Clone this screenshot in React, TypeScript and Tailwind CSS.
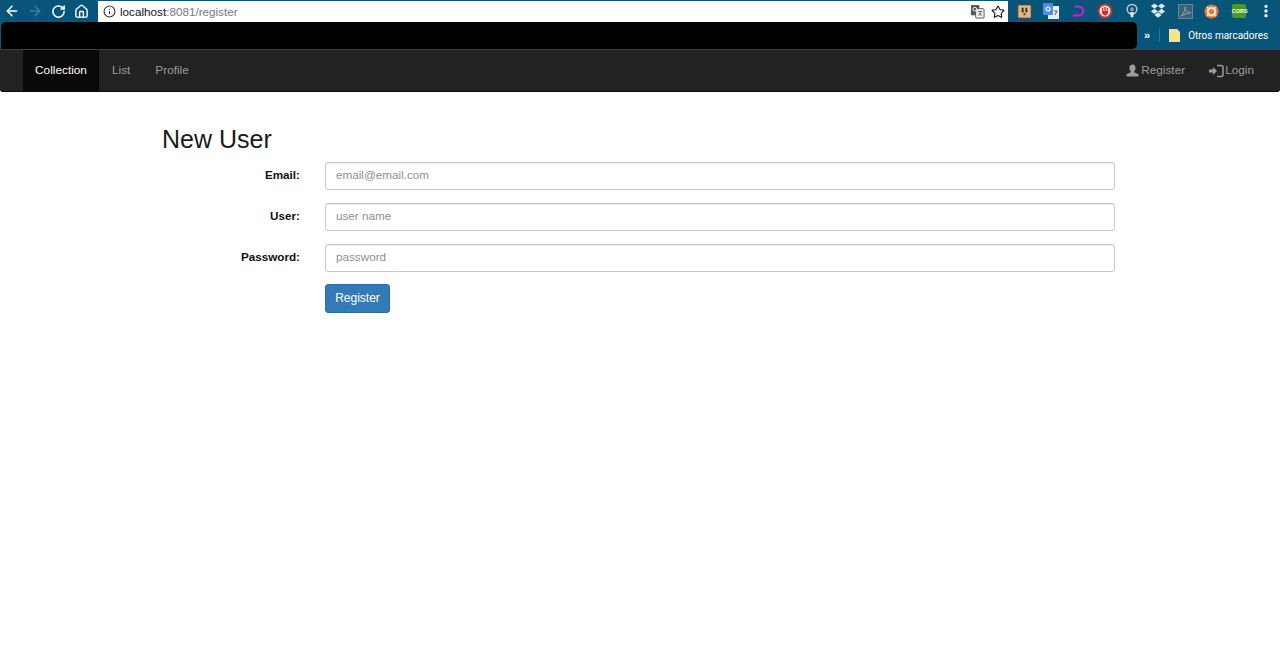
import { ArrowLeft, ArrowRight, RotateCw, Home, Info, Star, MoreVertical } from "lucide-react";
import type { ReactNode } from "react";

const sans = "font-['Liberation_Sans',Arial,sans-serif]";

function Cell({ children }: { children: ReactNode }) {
  return <div className="w-[26.8px] shrink-0 flex items-center justify-center">{children}</div>;
}

function ToolbarIcons() {
  return (
    <div className="w-[272px] shrink-0 pl-[3px] flex items-center">
      <Cell><svg width="15" height="15" viewBox="0 0 16 16"><rect x="1" y="1" width="14" height="14" rx="1" fill="#e3b98a" stroke="#6b4a2a" /><rect x="5" y="4" width="2" height="5" fill="#3a2a1a" /><rect x="9" y="4" width="2" height="5" fill="#3a2a1a" /><rect x="7" y="10" width="2" height="2" fill="#3a2a1a" /></svg></Cell>
      <Cell><svg width="16" height="16" viewBox="0 0 16 16"><rect x="5" y="3" width="11" height="13" fill="#e8edf2" /><rect x="0" y="0" width="10" height="12" rx="1" fill="#4a8ce8" /><circle cx="5" cy="6" r="2" fill="none" stroke="#fff" strokeWidth="1.2" /><path d="M11 8h3M12 12l2-4" stroke="#555" strokeWidth="1" fill="none" /></svg></Cell>
      <Cell><svg width="14" height="14" viewBox="0 0 16 16"><path d="M4 3h5a5 5 0 0 1 0 10H2" fill="none" stroke="#c81fc0" strokeWidth="2.6" /></svg></Cell>
      <Cell><svg width="16" height="16" viewBox="0 0 16 16"><circle cx="8" cy="8" r="7.5" fill="#c9302c" /><circle cx="8" cy="8" r="5.5" fill="#f6e9e6" /><path d="M5.5 7.5V5M7.2 7V4M8.8 7V4M10.4 7.5V5M5.5 8h5v2.5L9 12H7L5.5 10z" stroke="#c9302c" strokeWidth="1" fill="#c9302c" /></svg></Cell>
      <Cell><svg width="14" height="16" viewBox="0 0 16 16"><circle cx="8" cy="6" r="5.500" fill="none" stroke="#c3ccd2" strokeWidth="1.6" /><circle cx="8" cy="6" r="2.2" fill="#8fa0aa" /><path d="M6 9h4l-.6 6H6.6z" fill="#dfe4e8" /></svg></Cell>
      <Cell><svg width="16" height="16" viewBox="0 0 18 17"><path d="M5 0 1 3l4 3 4-3zM13 0 9 3l4 3 4-3zM5 6 1 9l4 3 4-3zM13 6 9 9l4 3 4-3zM5 13l4 3 4-3-4-3z" fill="#dfe6ea" /></svg></Cell>
      <Cell><svg width="15" height="15" viewBox="0 0 16 16"><rect x="0.5" y="0.5" width="15" height="15" fill="#36627c" stroke="#6c8a9c" /><path d="M3 13c3-2 5-7 4.500-10 0 4 2 6 6 6.500-3 0-6 1-10.500 3.500z" fill="none" stroke="#8fa6b4" strokeWidth="1" /></svg></Cell>
      <Cell><svg width="15" height="15" viewBox="0 0 16 16"><circle cx="8" cy="8" r="7.500" fill="#e8742c" /><circle cx="8" cy="8" r="4" fill="none" stroke="#f7e4d6" strokeWidth="2.400" /><path d="M3 3l3 3M13 3l-3 3M3 13l3-3M13 13l-3-3" stroke="#f7e4d6" strokeWidth="1.500" /></svg></Cell>
      <Cell><div className={`w-[14px] h-[14px] rounded-[2px] bg-[#4c9a1f] text-white text-[5.500px] font-bold leading-[14px] text-center ${sans}`}>CORS</div></Cell>
      <Cell><MoreVertical className="text-white" size={16} strokeWidth={3} /></Cell>
    </div>
  );
}

function Field({ label, placeholder }: { label: string; placeholder: string }) {
  return (
    <div className="flex items-center">
      <label className="w-[138px] pb-[2px] text-right text-[11.700px] font-bold text-[#111]">{label}</label>
      <input
        readOnly
        placeholder={placeholder}
        className="ml-[25px] flex-1 h-[28px] px-[10px] pb-[4px] text-[11.7px] rounded-[3px] border border-[#c8c8c8] shadow-[inset_0_1px_1px_rgba(0,0,0,0.08)] bg-white placeholder:text-[#8f8f8f] outline-none"
      />
    </div>
  );
}

export default function App() {
  return (
    <div className={`w-[1280px] h-[660px] bg-white overflow-hidden ${sans}`}>
      <div className="h-[50px] bg-[#08557a] flex flex-col">
        <div className="h-[22px] flex items-center">
          <div className="w-[98px] shrink-0 flex items-center text-white">
            <ArrowLeft className="ml-[4px]" size={16} strokeWidth={2.2} />
            <ArrowRight className="ml-[7px] text-[#3f7f9c]" size={16} strokeWidth={2.2} />
            <RotateCw className="ml-[8px]" size={15} strokeWidth={2.4} />
            <Home className="ml-[8px]" size={15} strokeWidth={2.2} />
          </div>
          <div className="w-[910px] shrink-0 h-[21px] mt-[1px] bg-white flex items-center text-[11.7px]">
            <Info className="ml-[5px] text-[#333]" size={13} />
            <span className="ml-[4px] text-[#111]">localhost</span>
            <span className="text-[#777]">:8081/register</span>
            <svg className="ml-auto" width="15" height="15" viewBox="0 0 16 16"><rect x="1" y="1" width="9" height="11" rx="1" fill="#555" /><rect x="6" y="5" width="9" height="10" rx="1" fill="#f2f2f2" stroke="#555" /><path d="M8.500 8h4.500M12 8c-.5 2-1.500 3.500-3 4.500M9.500 9.500c.5 1.200 1.500 2.200 3 3" stroke="#444" strokeWidth=".8" fill="none" /><circle cx="5" cy="5.500" r="2" fill="none" stroke="#fff" /></svg>
            <Star className="ml-[6px] mr-[3px] text-[#222]" size={14} strokeWidth={2} />
          </div>
          <ToolbarIcons />
        </div>
        <div className="h-[28px] flex items-start">
          <div className="w-[1136px] ml-[1px] h-[27px] bg-black rounded-t-[5px] rounded-br-[5px]" />
          <span className="ml-[7px] mt-[8px] text-[11px] font-bold text-white leading-none">»</span>
          <div className="ml-[9px] mt-[6px] w-px h-[14px] bg-[#2d7596]" />
          <svg className="ml-[9px] mt-[7px]" width="11" height="13" viewBox="0 0 11 13"><path d="M0 0h8l3 3v10H0z" fill="#f6e38c" /></svg>
          <span className="ml-[8px] mt-[7px] text-[10px] leading-[14px] text-white font-['Roboto',sans-serif]">Otros marcadores</span>
        </div>
      </div>

      <nav className="h-[42px] pl-[23px] pr-[14px] bg-[#222222] border-b border-[#0c0c0c] rounded-b-[3px] flex items-stretch text-[11.800px] text-[#9d9d9d]">
        <a className="w-[76px] -mb-[1px] bg-[#080808] text-white flex items-center justify-center">Collection</a>
        <a className="ml-[13px] flex items-center">List</a>
        <a className="ml-[25px] flex items-center">Profile</a>
        <a className="ml-auto flex items-center">
          <svg width="13" height="14" viewBox="0 0 14 14" fill="#9d9d9d"><path d="M7 0c2 0 3.300 1.600 3.300 3.800 0 1.500-.7 2.800-1.500 3.500v1l4.700 2.200V13H.5v-2.500l4.700-2.200v-1c-.8-.7-1.500-2-1.500-3.500C3.700 1.600 5 0 7 0z" /></svg>
          <span className="ml-[2px]">Register</span>
        </a>
        <a className="ml-[24px] mr-[12px] flex items-center">
          <svg width="15" height="14" viewBox="0 0 15 14" fill="none"><path d="M0 5.500h4V3l4 4-4 4V8.500H0z" fill="#9d9d9d" /><path d="M8 1.500h4a2 2 0 0 1 2 2v7a2 2 0 0 1-2 2H8" stroke="#9d9d9d" strokeWidth="1.500" /></svg>
          <span className="ml-[1px]">Login</span>
        </a>
      </nav>

      <main className="pl-[162px] pr-[165px]">
        <h1 className="mt-[32px] text-[25px] leading-[30px] text-[#1a1a1a]">New User</h1>
        <div className="mt-[8px] flex flex-col gap-[13px]">
          <Field label="Email:" placeholder="email@email.com" />
          <Field label="User:" placeholder="user name" />
          <Field label="Password:" placeholder="password" />
        </div>
        <button className="mt-[12px] ml-[163px] w-[65px] h-[29px] pb-[2px] rounded-[3px] bg-[#337ab7] border border-[#2e6da4] text-white text-[12px]">Register</button>
      </main>
    </div>
  );
}
